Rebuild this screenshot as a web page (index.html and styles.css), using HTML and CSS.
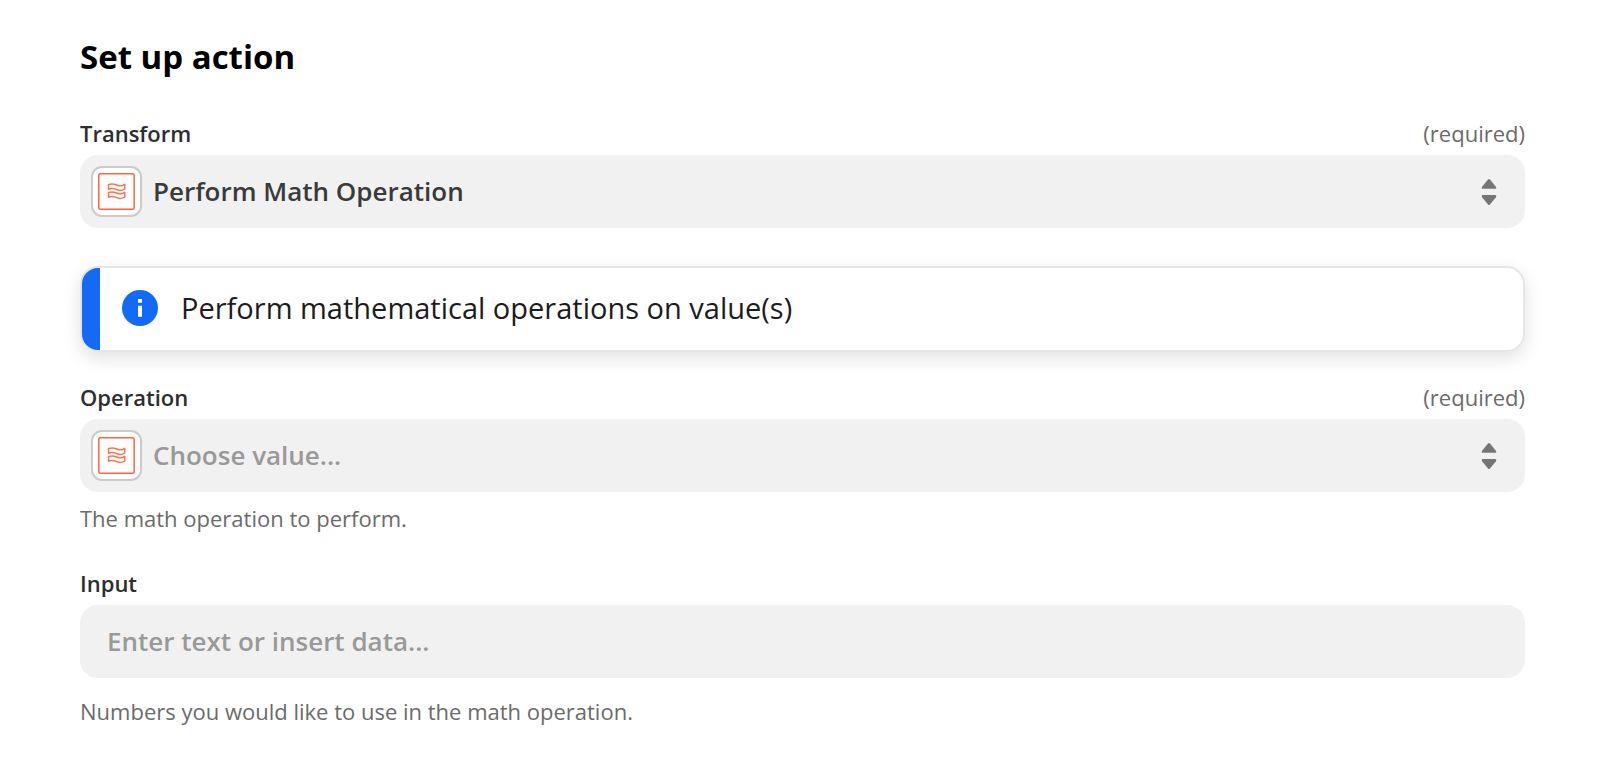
FILE: index.html
```html
<!DOCTYPE html>
<html lang="en">
<head>
<meta charset="utf-8">
<title>Set up action</title>
<link rel="stylesheet" href="styles.css">
</head>
<body>
<svg class="sprite" aria-hidden="true">
  <symbol id="waves" viewBox="0 0 37 37">
    <rect x="0.8" y="0.8" width="35.4" height="35.4" rx="1.5" fill="none" stroke="#ff6340" stroke-width="1.5"/>
    <g fill="none" stroke="#ff7350" stroke-width="1.5" stroke-linejoin="round">
      <path d="M10.500 11.700C13.500 10.300 16 10.900 18.500 12S24 13.300 26.800 11.400V16C24 17.900 21 17.700 18.500 16.600S13.500 14.900 10.500 16.300Z"/>
      <path d="M10.500 19.700C13.500 18.300 16 18.900 18.500 20S24 21.300 26.800 19.400V24C24 25.900 21 25.700 18.500 24.600S13.500 22.900 10.500 24.300Z"/>
    </g>
  </symbol>
  <symbol id="carets" viewBox="0 0 16 28">
    <path d="M7 1.500Q8 .3 9 1.500L14.900 8.700Q16 10.700 14 10.700H2Q0 10.700 1.100 8.700Z"/>
    <path d="M7 26.500Q8 27.700 9 26.500L14.900 19.300Q16 17 14 17H2Q0 17 1.100 19.300Z"/>
  </symbol>
</svg>
<main class="panel">
  <h1 class="title">Set up action</h1>
  <form class="form">
    <div class="field">
      <div class="field-head">
        <label class="label" for="transform">Transform</label>
        <span class="note">(required)</span>
      </div>
      <div class="control">
        <span class="app-icon"><svg class="waves" aria-hidden="true"><use href="#waves"/></svg></span>
        <select class="select" id="transform">
          <option>Perform Math Operation</option>
        </select>
        <svg class="carets" aria-hidden="true"><use href="#carets"/></svg>
      </div>
    </div>

    <div class="callout">
      <svg class="info" viewBox="0 0 36 36" aria-hidden="true">
        <circle cx="18" cy="18" r="18" fill="#136bf5"/>
        <path d="M16 9h4v3.800h-4zM16 15.800h4v11h-4z" fill="#fff"/>
      </svg>
      <p class="callout-text">Perform mathematical operations on value(s)</p>
    </div>

    <div class="field">
      <div class="field-head">
        <label class="label" for="operation">Operation</label>
        <span class="note">(required)</span>
      </div>
      <div class="control">
        <span class="app-icon"><svg class="waves" aria-hidden="true"><use href="#waves"/></svg></span>
        <select class="select select-empty" id="operation">
          <option>Choose value...</option>
        </select>
        <svg class="carets" aria-hidden="true"><use href="#carets"/></svg>
      </div>
      <p class="hint">The math operation to perform.</p>
    </div>

    <div class="field field-text">
      <div class="field-head">
        <label class="label" for="input">Input</label>
      </div>
      <input class="control input" id="input" type="text" placeholder="Enter text or insert data...">
      <p class="hint hint-far">Numbers you would like to use in the math operation.</p>
    </div>
  </form>
</main>
</body>
</html>
```
FILE: styles.css
```css
* {
  box-sizing: border-box;
}

body {
  margin: 0;
  background: #fff;
  color: #2d2e2e;
  font-family: "Open Sans", "Noto Sans", sans-serif;
}

.sprite {
  display: none;
}

.panel {
  padding: 33px 75px 40px 80px;
}

.title {
  margin: 0 0 37px;
  color: #000;
  font-size: 33px;
  font-weight: 700;
  line-height: 48px;
}

.field-head {
  display: flex;
  justify-content: space-between;
  margin-bottom: 7px;
  font-size: 22px;
  line-height: 30px;
}

.label {
  font-weight: 600;
}

.note {
  color: #6b6b6b;
}

.control {
  display: flex;
  align-items: center;
  width: 100%;
  height: 73px;
  border: 0;
  border-radius: 18px;
  background: #f1f1f1;
}

.app-icon {
  display: flex;
  flex: none;
  align-items: center;
  justify-content: center;
  width: 51px;
  height: 51px;
  margin-left: 11px;
  border: 2px solid #cbcbcb;
  border-radius: 11px;
  background: #fff;
}

.waves {
  width: 37px;
  height: 37px;
}

.select {
  flex: 1;
  min-width: 0;
  height: 100%;
  padding: 0 11px 2px;
  border: 0;
  background: transparent;
  color: #3a3a3a;
  font: 600 26px "Open Sans", "Noto Sans", sans-serif;
  appearance: none;
}

.select-empty {
  color: #999;
}

.carets {
  flex: none;
  width: 16px;
  height: 28px;
  margin-right: 28px;
  fill: #757575;
}

.callout {
  display: flex;
  align-items: center;
  gap: 23px;
  margin: 38px 0 30px;
  padding: 19px 22px 21px 40px;
  border: 2px solid #e6e6e6;
  border-radius: 18px;
  background: linear-gradient(to right, #136bf5 18px, #fff 18px);
  box-shadow: 0 6px 18px rgba(0, 0, 0, 0.12);
}

.info {
  flex: none;
  width: 36px;
  height: 36px;
}

.callout-text {
  margin: 0;
  color: #1c1c1c;
  font-size: 29px;
  line-height: 42px;
}

.hint {
  margin: 11px 0 0;
  color: #6b6b6b;
  font-size: 22px;
  line-height: 30px;
}

.hint-far {
  margin-top: 18px;
}

.field-text {
  margin-top: 35px;
}

.input {
  padding: 0 27px 2px;
  color: #3a3a3a;
  font: 600 26px "Open Sans", "Noto Sans", sans-serif;
}

.input::placeholder {
  color: #999;
  opacity: 1;
}
```
